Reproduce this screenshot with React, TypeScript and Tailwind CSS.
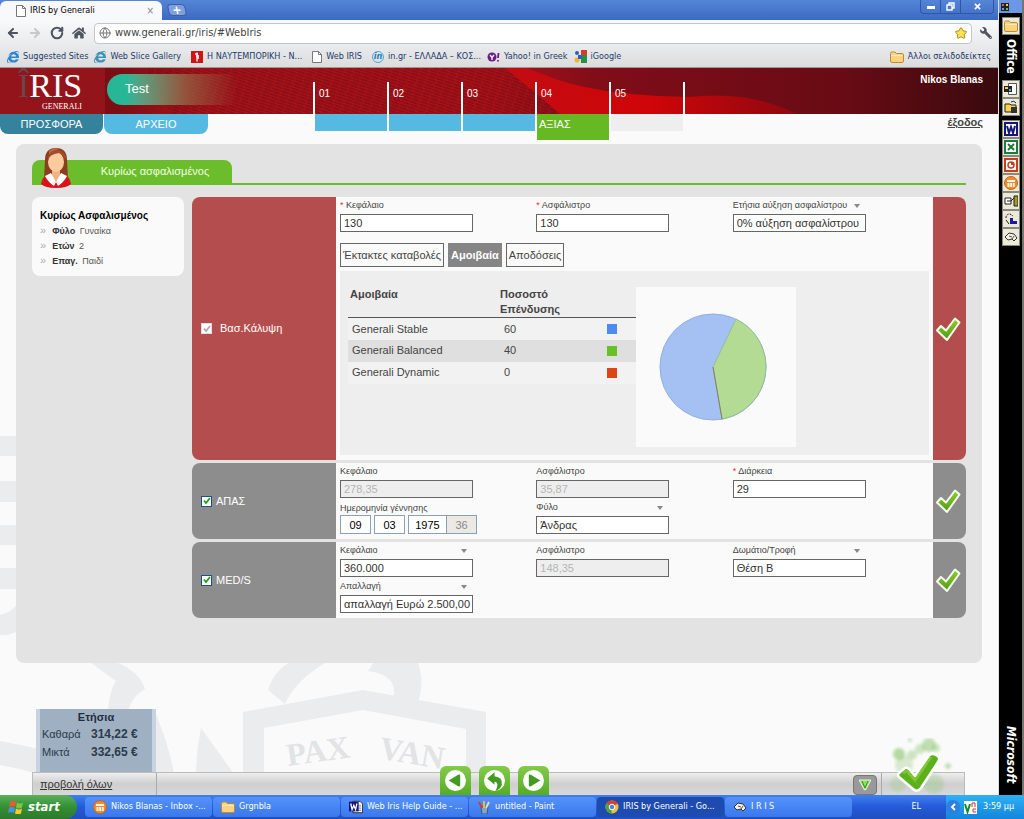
import { useId, useState } from "react";
import type { ReactNode } from "react";
import clsx from "clsx";
import { ArrowLeft, ArrowRight, Globe, RotateCw } from "lucide-react";
import { FaHome, FaInternetExplorer, FaStar, FaWrench } from "react-icons/fa";

const steps = [
  { no: "01", label: "", bar: "h-[17px] bg-[#55b9e1]" },
  { no: "02", label: "", bar: "h-[17px] bg-[#55b9e1]" },
  { no: "03", label: "", bar: "h-[17px] bg-[#55b9e1]" },
  { no: "04", label: "ΑΞΙΑΣ", bar: "h-[26px] bg-[#66b922]" },
  { no: "05", label: "", bar: "h-[17px] bg-[#eeeeee]" },
];

const funds = [
  { name: "Generali Stable", share: 60, color: "bg-[#4f8af0]", row: "bg-[#f2f2f2]" },
  { name: "Generali Balanced", share: 40, color: "bg-[#67c027]", row: "bg-[#dfdfdf]" },
  { name: "Generali Dynamic", share: 0, color: "bg-[#dd4418]", row: "bg-[#f2f2f2]" },
];

const tabs = ["Έκτακτες καταβολές", "Αμοιβαία", "Αποδόσεις"];

function PageIcon() {
  return (
    <svg viewBox="0 0 10 12" className="h-3 w-[10px] shrink-0">
      <path d="M.5.5h6l3 3v8h-9z" fill="#fff" stroke="#777" />
      <path d="M6.500.5v3h3" fill="none" stroke="#777" />
    </svg>
  );
}

function FolderIcon() {
  return (
    <svg viewBox="0 0 14 12" className="h-3 w-3.5 shrink-0">
      <path d="M.5 2.500q0-1.500 1.500-1.500h3l1.500 1.500h5.500q1.500 0 1.500 1.500v6q0 1.500-1.500 1.500H2Q.5 11.500.5 10z" fill="#fbd27d" stroke="#c08a35" />
      <path d="M1 4.500h12" stroke="#fdebbb" />
    </svg>
  );
}

function WordIcon() {
  return (
    <svg viewBox="0 0 16 16" className="size-3.5 shrink-0">
      <path d="M4.500 1.500h8l3 3v10h-11z" fill="#fff" stroke="#222" />
      <path d="M9 6h5M9 8h5M9 10h5M9 12h5" stroke="#889" />
      <path d="M0 2h11v11H0z" fill="#15157c" />
      <path d="M2 4l1.500 7 2-5 2 5L9 4" fill="none" stroke="#fff" strokeWidth="1.500" />
    </svg>
  );
}

function OutlookIcon() {
  return (
    <svg viewBox="0 0 14 14" className="size-3.5 shrink-0">
      <circle cx="7" cy="7" r="6.500" fill="#f08c2e" stroke="#c8641a" />
      <path d="M3 4h8v2H3zM3.500 7h2v4h-2zM6.200 7h1.800v4H6.200zM8.800 7h2v4h-2z" fill="#fff6e6" />
    </svg>
  );
}

function PaintIcon() {
  return (
    <svg viewBox="0 0 14 14" className="size-3.5 shrink-0">
      <path d="M4 7h7l-1 7H5z" fill="#7fa6c9" stroke="#345" strokeWidth=".7" />
      <path d="M5 8L2 2" stroke="#d43b2a" strokeWidth="1.800" />
      <path d="M7 8V1" stroke="#f2c230" strokeWidth="1.800" />
      <path d="M9 8l3-6" stroke="#e8dcc4" strokeWidth="1.800" />
    </svg>
  );
}

function HelmetIcon() {
  return (
    <svg viewBox="0 0 14 12" className="h-3 w-3.5 shrink-0">
      <path d="M1 6l4-4 5 1 3 4-3 3-2-2-4 1z" fill="#f4efe2" stroke="#333" />
      <path d="M5 5l3 1M8 8l2-3" stroke="#555" />
    </svg>
  );
}

function ChromeBall() {
  return (
    <svg viewBox="0 0 14 14" className="size-3.5 shrink-0">
      <circle cx="7" cy="7" r="6.500" fill="#f2c12e" />
      <path d="M7 7L1.400 3.700A6.500 6.500 0 0 1 12.600 3.700z" fill="#d8402c" />
      <path d="M7 7L1.400 3.700A6.500 6.500 0 0 0 6.500 13.500z" fill="#4ba043" />
      <circle cx="7" cy="7" r="2.800" fill="#4a86d8" stroke="#fff" />
    </svg>
  );
}

function CheckMark({ className }: { className: string }) {
  return (
    <svg viewBox="0 0 26 26" className={className}>
      <defs>
        <linearGradient id="tick" x1="0" y1="0" x2="0" y2="1">
          <stop offset="0" stopColor="#8fd030" />
          <stop offset="1" stopColor="#4f9a15" />
        </linearGradient>
      </defs>
      <path d="M2 14.500l4-4.500 5 4.500L20 2.500l4.500 4L12 24z" fill="url(#tick)" stroke="#f8fdf0" strokeWidth="2" strokeLinejoin="round" />
    </svg>
  );
}

function Bookmark({ icon, children }: { icon: ReactNode; children: ReactNode }) {
  return (
    <a href="#" className="flex items-center gap-1 whitespace-nowrap">
      {icon}
      {children}
    </a>
  );
}

function BrowserChrome() {
  return (
    <div className="font-['DejaVu_Sans_Condensed','Liberation_Sans',sans-serif] text-[9px]">
      <div className="flex h-5 items-end bg-linear-to-b from-[#5585d6] to-[#3c69c2]">
        <div className="flex h-[19px] w-[162px] items-center gap-1 rounded-t-md bg-[#f8f9fb] pr-2 pl-4 text-black">
          <PageIcon />
          <span className="flex-1 whitespace-nowrap">IRIS by Generali</span>
          <button aria-label="Close tab" className="text-[10px] text-[#888]">×</button>
        </div>
        <button aria-label="New tab" className="mb-1 ml-1.5 h-3 w-[18px] skew-x-12 rounded-sm border border-[#3b60a8] bg-[#7f9fdc] text-[12px] leading-[8px] font-bold text-white">+</button>
        <div className="mr-1 ml-auto flex h-[14px] self-start rounded-b border border-t-0 border-[#2f57a8] text-white">
          <button aria-label="Minimize" className="flex w-5 items-end justify-center border-r border-[#2f57a8] pb-1">
            <svg viewBox="0 0 8 3" className="h-[3px] w-2"><path d="M0 0h8v3H0z" fill="#fff" /></svg>
          </button>
          <button aria-label="Restore" className="flex w-5 items-center justify-center border-r border-[#2f57a8]">
            <svg viewBox="0 0 9 9" className="size-[9px]"><path d="M3 3V1h5v5H6M1 3h5v5H1z" fill="none" stroke="#fff" strokeWidth="1.400" /></svg>
          </button>
          <button aria-label="Close" className="flex w-8 items-center justify-center">
            <svg viewBox="0 0 8 8" className="size-[7px]"><path d="M1 1l6 6M7 1L1 7" stroke="#fff" strokeWidth="1.800" /></svg>
          </button>
        </div>
      </div>
      <div className="flex h-[26px] items-center gap-2 bg-linear-to-b from-[#f8f9fb] to-[#e9eaec] px-1.5 text-[#4d5560]">
        <button aria-label="Back"><ArrowLeft className="size-3.5" strokeWidth={3.5} /></button>
        <button aria-label="Forward"><ArrowRight className="size-3.5 text-[#c6c9cd]" strokeWidth={3.5} /></button>
        <button aria-label="Reload"><RotateCw className="size-3.5" strokeWidth={3.5} /></button>
        <button aria-label="Home"><FaHome className="size-3.5" /></button>
        <div className="flex h-[21px] flex-1 items-center gap-1 rounded border border-[#c5c5c5] bg-white px-1">
          <Globe className="size-3 text-[#777]" />
          <input
            aria-label="Address"
            className="min-w-0 flex-1 bg-transparent font-['DejaVu_Sans_Condensed','Liberation_Sans',sans-serif] text-[11px] text-[#444] outline-none"
            defaultValue="www.generali.gr/iris/#WebIris"
          />
          <FaStar className="size-3 fill-[#ffe04d] stroke-[#9a7a20] stroke-[40px]" />
        </div>
        <button aria-label="Settings"><FaWrench className="size-3 -scale-x-100" /></button>
      </div>
      <div className="flex h-[22px] items-center gap-1.5 border-b border-[#999] bg-linear-to-b from-[#e9eaec] to-[#dcdcdc] px-[7px] text-[#1c3a6e]">
        <Bookmark icon={<FaInternetExplorer className="size-3 text-[#2d87cf]" />}>Suggested Sites</Bookmark>
        <Bookmark icon={<FaInternetExplorer className="size-3 text-[#3b94b8]" />}>Web Slice Gallery</Bookmark>
        <div className="ml-1">
          <Bookmark
            icon={
              <svg viewBox="0 0 12 12" className="size-3">
                <path d="M0 0h12v12H0z" fill="#cf1515" />
                <path d="M6 1.500v9M4 3h3M5 5h3M6 7h2" stroke="#fff" strokeWidth="1.300" />
              </svg>
            }
          >
            Η ΝΑΥΤΕΜΠΟΡΙΚΗ - Ν...
          </Bookmark>
        </div>
        <div className="ml-1">
          <Bookmark icon={<PageIcon />}>Web IRIS</Bookmark>
        </div>
        <div className="ml-1">
          <Bookmark icon={<span className="flex size-3 items-center justify-center rounded-full border border-[#4aa9d4] text-[9px] leading-none font-bold text-[#1f7fb8] italic">in</span>}>
            in.gr - ΕΛΛΑΔΑ – ΚΟΣ...
          </Bookmark>
        </div>
        <Bookmark
          icon={
            <svg viewBox="0 0 13 10" className="h-2.5 w-[13px]">
              <circle cx="5" cy="5" r="4.500" fill="#6d1b86" />
              <path d="M3 3l2 2.500L7 3M5 5.500V8" fill="none" stroke="#fff" strokeWidth="1.300" />
              <path d="M11.500 1l-.5 5M11 8v1.500" stroke="#6d1b86" strokeWidth="1.800" />
            </svg>
          }
        >
          Yahoo! in Greek
        </Bookmark>
        <Bookmark
          icon={
            <svg viewBox="0 0 13 13" className="size-[13px]">
              <path d="M7 0h6v5H7z" fill="#d93a25" />
              <path d="M7 5h6v8H7z" fill="#269044" />
              <circle cx="3" cy="3" r="2" fill="#2b5fc4" />
              <circle cx="3" cy="10" r="2.500" fill="#efb52e" />
              <path d="M4 5h4v4H4z" fill="#2b5fc4" />
            </svg>
          }
        >
          iGoogle
        </Bookmark>
        <div className="ml-auto">
          <Bookmark icon={<FolderIcon />}>Άλλοι σελιδοδείκτες</Bookmark>
        </div>
      </div>
    </div>
  );
}

function HeaderArt() {
  return (
    <svg viewBox="0 0 998 46" preserveAspectRatio="none" className="absolute inset-x-0 top-0 h-[46px] w-full">
      <defs>
        <linearGradient id="banner">
          <stop offset="0" stopColor="#6f0c12" />
          <stop offset=".12" stopColor="#7d0d13" />
          <stop offset=".2" stopColor="#a5141a" />
          <stop offset=".5" stopColor="#a81218" />
          <stop offset=".6" stopColor="#800d18" />
          <stop offset=".85" stopColor="#680b14" />
          <stop offset="1" stopColor="#380a0e" />
        </linearGradient>
        <linearGradient id="wave">
          <stop offset="0" stopColor="#c20c12" />
          <stop offset=".5" stopColor="#cf0508" />
          <stop offset="1" stopColor="#8d0810" />
        </linearGradient>
        <pattern id="mesh" width="9" height="6" patternUnits="userSpaceOnUse" patternTransform="rotate(18)">
          <path d="M0 1h9M0 4h9" stroke="#6e0710" strokeWidth="1.200" />
          <path d="M3 0l3 6" stroke="#c0141a" strokeWidth=".6" />
        </pattern>
      </defs>
      <path d="M0 0h998v46H0z" fill="url(#banner)" />
      <path d="M145 0h382q30 28 70 46H172z" fill="url(#mesh)" opacity=".85" />
      <path d="M505 0h22c55 24 100 27 160 29 40-3 70-2 110 17H560Q540 28 505 0z" fill="url(#wave)" />
      <path d="M0 0h105v46H0z" fill="#93141a" />
    </svg>
  );
}

function Header() {
  return (
    <header className="relative flex items-start">
      <HeaderArt />
      <div className="relative w-[313px] text-[11px]">
        <div className="flex h-[46px] items-center">
          <div className="w-[107px] pl-[18px] font-['Liberation_Serif',serif] text-white">
            <div className="text-[34px] leading-8"><span className="text-[#69474a]">Î</span>RIS</div>
            <div className="w-16 text-right text-[8px] leading-[10px]">GENERALI</div>
          </div>
          <div className="mb-1 flex h-[31px] w-[130px] items-center rounded-l-full bg-linear-to-r from-[#27b797] from-15% via-[#94704a]/70 via-60% to-transparent pl-[18px] text-[13px] text-white">
            Test
          </div>
        </div>
        <nav className="flex text-center leading-5 text-white">
          <a href="#" className="w-[103px] rounded-b-lg bg-[#35829c]">ΠΡΟΣΦΟΡΑ</a>
          <a href="#" className="ml-px w-[104px] rounded-b-lg bg-[#55b9e1]">ΑΡΧΕΙΟ</a>
        </nav>
      </div>
      <ol className="relative flex items-start pt-3.5 text-[10px] text-white">
        {steps.map((step) => (
          <li key={step.no} className="flex w-[74px]">
            <div className="h-[49px] w-0.5 bg-white" />
            <div className="flex-1">
              <div className="h-8 pl-1 leading-6">{step.no}</div>
              <div className={clsx("pl-0.5 text-[11px] leading-5", step.bar)}>{step.label}</div>
            </div>
          </li>
        ))}
        <li className="h-8 w-0.5 bg-white" />
      </ol>
      <div className="relative ml-auto pr-[15px] text-right text-[10px] font-bold">
        <div className="h-[46px] pt-1 text-white">Nikos Blanas</div>
        <a href="#" className="text-[11px] text-[#444] underline">έξοδος</a>
      </div>
    </header>
  );
}

function Watermark() {
  return (
    <svg viewBox="0 0 998 727" className="absolute bottom-0 left-0 w-full">
      <g fill="#ebecee">
        <path d="M0 368h60v20H0zM0 413h60v21H0zM0 457h60v20H0zM0 500h60v21H0z" />
        <path d="M0 547q14-3 20-16v30q-8 7-20 6z" />
        <path d="M82 587l34 7q24 10 29 27-17 10-17 28l-20-6q2-22 8-30-18-12-34-26z" />
        <path d="M0 673q45 8 82 20v28Q40 704 0 697z" />
        <path d="M300 590q-25 8-32 32l17 14q10-24 45-44zM376 591h40q12 24-2 52l-22-6q10-30-24-34z" />
        <path d="M156 646q20 50 20 81h-20zM201 660q30 42 45 62v5h-49q-3-35 4-67z" />
        <path d="M243 644l120-22 123 22v83h-20v-66l-103-19-99 18v67h-21z" />
      </g>
      <g fill="#e2e3e5" fontFamily="Liberation Serif, serif" fontSize="32" fontWeight="bold">
        <text x="288" y="698" transform="rotate(-8 288 698)">PAX</text>
        <text x="378" y="690" transform="rotate(10 378 690)">VAN</text>
      </g>
    </svg>
  );
}

function WomanIcon() {
  return (
    <svg viewBox="0 0 32 42" className="h-[42px] w-8">
      <path d="M16 1Q5 1 5 13L4 32q5 4 12 4t12-4L27 13Q27 1 16 1z" fill="#8c3d20" />
      <path d="M9 4q5-4 10-2-8 2-10 9z" fill="#c46a40" />
      <path d="M1 37q1-8 10-10h10q9 2 10 10-4 4-15 4T1 37z" fill="#d8141a" />
      <path d="M12 22h8v8l-4 5-4-5z" fill="#f0b184" />
      <path d="M5 29l6-3 5 9-2 4q-6-4-9-10zM27 29l-6-3-5 9 2 4q6-4 9-10z" fill="#fff" />
      <ellipse cx="16" cy="15" rx="8" ry="10" fill="#fbcb9d" />
      <path d="M8 14q1-7 11-8 6 2 6 9l1-6Q23 2 15 3 7 5 8 14z" fill="#a24c2b" />
    </svg>
  );
}

type FieldProps = {
  label: string;
  value: string;
  required?: boolean;
  disabled?: boolean;
  dropdown?: boolean;
};

function Field({ label, value, required, disabled, dropdown }: FieldProps) {
  const id = useId();
  const box = "block h-[18px] w-[133px] appearance-none border border-[#666] pl-[3px] text-[11px] leading-4";

  return (
    <div>
      <div className="flex h-4 w-[127px] items-center justify-between text-[9px] text-[#444]">
        <label htmlFor={id} className="whitespace-nowrap">
          {required && <span className="text-[#d33]">* </span>}
          {label}
        </label>
        {dropdown && (
          <svg viewBox="0 0 6 4" className="h-1 w-1.5"><path d="M0 0h6L3 4z" fill="#888" /></svg>
        )}
      </div>
      {dropdown ? (
        <select id={id} className={clsx(box, "bg-white text-[#333]")}>
          <option>{value}</option>
        </select>
      ) : (
        <input
          id={id}
          defaultValue={value}
          disabled={disabled}
          className={clsx(box, disabled ? "bg-[#eeeeee] text-[#b5b5b5]" : "bg-white text-[#333]")}
        />
      )}
    </div>
  );
}

function BirthDate() {
  const part = "h-[19px] border border-[#8aa0b5] text-center text-[11px]";

  return (
    <fieldset>
      <legend className="h-4 text-[9px] leading-4 text-[#444]">Ημερομηνία γέννησης</legend>
      <div className="-mt-px flex">
        <input aria-label="Ημέρα" defaultValue="09" className={clsx(part, "mr-[3px] w-[31px] bg-white")} />
        <input aria-label="Μήνας" defaultValue="03" className={clsx(part, "mr-[3px] w-[31px] bg-white")} />
        <input aria-label="Έτος" defaultValue="1975" className={clsx(part, "w-[39px] bg-white")} />
        <input aria-label="Ηλικία" defaultValue="36" disabled className={clsx(part, "-ml-px w-[31px] bg-[#ece9e4] text-[#888]")} />
      </div>
    </fieldset>
  );
}

type CoverProps = {
  title: string;
  main?: boolean;
  children: ReactNode;
};

function Cover({ title, main, children }: CoverProps) {
  const color = main ? "bg-[#b44d4d]" : "bg-[#8d8d8d]";

  return (
    <section className="flex rounded-[10px] bg-[#fafafa]">
      <label className={clsx("flex w-36 shrink-0 items-center rounded-l-lg pl-[9px] text-[11px] text-white", main ? "gap-2" : "gap-1", color)}>
        <span className="grid place-items-center">
          <input
            type="checkbox"
            defaultChecked
            disabled={main}
            className={clsx("size-[11px] appearance-none border bg-white [grid-area:1/1]", main ? "border-[#ddd]" : "border-[#1c5180]")}
          />
          <svg viewBox="0 0 8 8" className="pointer-events-none size-2 [grid-area:1/1]">
            <path d="M1 3.500l2 2.500 4-5" fill="none" stroke={main ? "#aaa" : "#21a121"} strokeWidth="1.800" />
          </svg>
        </span>
        {title}
      </label>
      <div className="flex-1 px-1 pt-px pb-[5px]">{children}</div>
      <div className={clsx("flex w-[33px] items-center rounded-r-lg pl-0.5", color)}>
        <CheckMark className="size-[26px]" />
      </div>
    </section>
  );
}

function FundsPanel() {
  return (
    <div className="mt-1 flex bg-[#eeeeee] px-2 pt-4 pb-2">
      <table className="w-72 self-start text-left text-[11px] text-[#444]">
        <thead>
          <tr className="border-b border-[#555] align-top leading-[15px]">
            <th className="w-[152px] pl-0.5">Αμοιβαία</th>
            <th className="w-[107px]">Ποσοστό<br />Επένδυσης</th>
            <th />
          </tr>
        </thead>
        <tbody>
          {funds.map((fund) => (
            <tr key={fund.name} className={clsx("h-[22px]", fund.row)}>
              <td className="pl-1">{fund.name}</td>
              <td className="pl-1">{fund.share}</td>
              <td><div className={clsx("size-2.5", fund.color)} /></td>
            </tr>
          ))}
        </tbody>
      </table>
      <svg viewBox="0 0 160 160" className="size-40 bg-[#fafafa]">
        <circle cx="77" cy="80" r="53" fill="#a5c1f3" stroke="#8fb0dc" />
        <path d="M77 80L100 32A53 53 0 0 1 86 132z" fill="#b3db93" stroke="#8fc09a" />
        <path d="M77 80l9 52" stroke="#8a7a6a" />
      </svg>
    </div>
  );
}

function MainPanel() {
  const [active, setActive] = useState("Αμοιβαία");

  return (
    <main className="relative mx-4 mt-1 rounded-lg bg-[#e3e3e3] px-4 pt-4 pb-[45px]">
      <div className="border-b-2 border-[#6cbd2b]">
        <div className="flex h-[23px] w-[200px] items-center rounded-t-lg bg-[#6cbd2b] pl-2 text-[11px] text-[#f2ffe6]">
          <div className="-mt-2"><WomanIcon /></div>
          <h2 className="flex-1 pl-1.5 text-center">Κυρίως ασφαλισμένος</h2>
        </div>
      </div>
      <div className="mt-3 flex items-start gap-2">
        <aside className="w-38 rounded-lg bg-[#fafafa] px-2 pt-3 pb-2 text-[9px] text-[#555]">
          <h3 className="text-[10px] leading-[14px] font-bold whitespace-nowrap text-black">Κυρίως Ασφαλισμένος</h3>
          <ul className="leading-[14px]">
            <li><span className="mr-1.5 text-[11px] text-[#aaa]">»</span><b className="mr-0.5 text-[#333]">Φύλο</b> Γυναίκα</li>
            <li><span className="mr-1.5 text-[11px] text-[#aaa]">»</span><b className="mr-0.5 text-[#333]">Ετών</b> 2</li>
            <li><span className="mr-1.5 text-[11px] text-[#aaa]">»</span><b className="mr-0.5 text-[#333]">Επαγ.</b> Παιδί</li>
          </ul>
        </aside>
        <div className="flex min-w-0 flex-1 flex-col gap-[3px]">
          <Cover title="Βασ.Κάλυψη" main>
            <div className="grid grid-cols-3">
              <Field label="Κεφάλαιο" value="130" required />
              <Field label="Ασφάλιστρο" value="130" required />
              <Field label="Ετήσια αύξηση ασφαλίστρου" value="0% αύξηση ασφαλίστρου" dropdown />
            </div>
            <div className="mt-[11px] flex gap-1 text-[11px]">
              {tabs.map((tab) => (
                <button
                  key={tab}
                  onClick={() => setActive(tab)}
                  className={clsx(
                    "h-6 border px-0.5",
                    tab === active ? "border-[#858585] bg-[#858585] font-bold text-white" : "border-[#666] bg-[#fafafa] text-[#444]",
                  )}
                >
                  {tab}
                </button>
              ))}
            </div>
            <FundsPanel />
          </Cover>
          <Cover title="ΑΠΑΣ">
            <div className="grid grid-cols-3 gap-y-0.5">
              <Field label="Κεφάλαιο" value="278,35" disabled />
              <Field label="Ασφάλιστρο" value="35,87" disabled />
              <Field label="Διάρκεια" value="29" required />
              <BirthDate />
              <Field label="Φύλο" value="Άνδρας" dropdown />
            </div>
          </Cover>
          <Cover title="MED/S">
            <div className="grid grid-cols-3 gap-y-0.5">
              <Field label="Κεφάλαιο" value="360.000" dropdown />
              <Field label="Ασφάλιστρο" value="148,35" disabled />
              <Field label="Δωμάτιο/Τροφή" value="Θέση Β" dropdown />
              <Field label="Απαλλαγή" value="απαλλαγή Ευρώ 2.500,00" dropdown />
            </div>
          </Cover>
        </div>
      </div>
    </main>
  );
}

function NavButton({ label, children }: { label: string; children: ReactNode }) {
  return (
    <button aria-label={label} className="flex h-[29px] w-[31px] items-center justify-center rounded-t-md bg-linear-to-b from-[#83cb4a] to-[#55ad22]">
      <svg viewBox="0 0 22 22" className="size-[23px]">
        <circle cx="11" cy="11" r="10" fill="#fff" />
        {children}
      </svg>
    </button>
  );
}

function SplashCheck() {
  return (
    <svg viewBox="0 0 70 57" className="h-[57px] w-[70px]">
      <defs>
        <filter id="soft"><feGaussianBlur stdDeviation="1.600" /></filter>
      </defs>
      <g fill="#86c46a" filter="url(#soft)">
        <circle cx="13" cy="16" r="6" opacity=".6" />
        <circle cx="26" cy="17" r="5" opacity=".4" />
        <circle cx="43" cy="7" r="7" opacity=".5" />
        <circle cx="34" cy="11" r="5" opacity=".4" />
        <circle cx="50" cy="10" r="4" opacity=".4" />
        <circle cx="18" cy="27" r="9" opacity=".3" />
        <circle cx="12" cy="46" r="8" opacity=".25" />
        <circle cx="48" cy="46" r="10" opacity=".3" />
        <circle cx="62" cy="28" r="3" opacity=".5" />
        <circle cx="24" cy="2" r="2" opacity=".5" />
      </g>
      <path d="M13 35l6-5q2-1 4 1l6 7 13-19q3-5 8-2 5 2 2 7L35 50q-4 5-8 1L13 39q-2-2 0-4z" fill="#5cb01c" stroke="#fff" strokeWidth="2.500" strokeLinejoin="round" />
      <path d="M17 35l4-2 8 9 16-23" fill="none" stroke="#9fdc4a" strokeWidth="3" opacity=".5" />
    </svg>
  );
}

function Footer() {
  return (
    <footer className="relative mt-auto mr-[33px] ml-8">
      <div className="ml-1 h-[63px] w-[120px] border-x-4 border-[#c7d3e0] bg-[#9fb0c2]">
        <table className="w-full text-[11px] leading-[18px] text-[#2c3a4a]">
          <caption className="leading-4 font-bold text-[#1f2d3d]">Ετήσια</caption>
          <tbody>
            <tr><th className="w-[51px] pl-0.5 text-left font-normal">Καθαρά</th><td className="text-[12px] font-bold">314,22 €</td></tr>
            <tr><th className="pl-0.5 text-left font-normal">Μικτά</th><td className="text-[12px] font-bold">332,65 €</td></tr>
          </tbody>
        </table>
      </div>
      <div className="flex h-[23px] items-end border border-b-0 border-[#bbb] bg-linear-to-b from-[#eeeeee] via-[#cfcfcf] to-[#d8d8d8]">
        <div className="h-full w-[124px] border-r border-[#aaa] pl-[7px] text-[11px] leading-[22px]">
          <a href="#" className="text-[#333] underline">προβολή όλων</a>
        </div>
        <div className="flex flex-1 justify-end gap-2">
          <NavButton label="Προηγούμενο">
            <path d="M4.500 11l9-5.500q2-1 2 1v9q0 2-2 1z" fill="#459a22" />
          </NavButton>
          <NavButton label="Επαναφορά">
            <path d="M4 9l7-6v4q8 1 7 8-1 4-6 6 4-8-1-9v3z" fill="#459a22" />
          </NavButton>
          <NavButton label="Επόμενο">
            <path d="M17.500 11l-9-5.500q-2-1-2 1v9q0 2 2 1z" fill="#459a22" />
          </NavButton>
        </div>
        <div className="flex w-[415px] items-end justify-end">
          <button aria-label="Φίλτρο" className="flex h-5 w-6 items-center justify-center rounded border border-[#777] bg-[#999]">
            <svg viewBox="0 0 12 12" className="size-3"><path d="M0 1h12L6.500 11h-1z" fill="#8fe060" stroke="#fff" strokeWidth=".8" /><path d="M3 2l3 7 3-7" fill="none" stroke="#3c8f20" /></svg>
          </button>
          <div className="ml-1 h-[22px] w-px bg-[#aaa]" />
          <button aria-label="Αποδοχή" className="mr-2 ml-1"><SplashCheck /></button>
        </div>
      </div>
    </footer>
  );
}

function OfficeTile({ children }: { children: ReactNode }) {
  return (
    <button aria-label="Office shortcut" className="flex size-[18px] items-center justify-center border border-[#8a877c] bg-[#ece9d8]">
      {children}
    </button>
  );
}

function OfficeBar() {
  return (
    <aside className="flex w-[26px] flex-col items-center border-r-2 border-l border-r-[#77756c] border-l-[#ddd] bg-black font-['DejaVu_Sans_Condensed','Liberation_Sans',sans-serif] font-bold text-white">
      <div className="flex h-[13px] w-full items-center bg-[#6b97e6] pl-0.5">
        <svg viewBox="0 0 8 8" className="size-2"><path d="M0 0h8v8H0z" fill="#222" /><path d="M1 1h2v2H1z" fill="#e55" /><path d="M5 1h2v2H5z" fill="#fc3" /><path d="M1 5h2v2H1z" fill="#5ae" /><path d="M5 5h2v2H5z" fill="#5c5" /></svg>
      </div>
      <div className="mt-1"><OfficeTile><FolderIcon /></OfficeTile></div>
      <span className="mt-1 text-[12px] leading-5 [writing-mode:vertical-rl]">Office</span>
      <div className="mt-1.5 flex flex-col">
        <OfficeTile>
          <svg viewBox="0 0 14 14" className="size-3.5"><path d="M4.500 1.500h8v11h-8z" fill="#fff" stroke="#555" /><path d="M0 4h8v6H0z" fill="#222" /><path d="M1 5h3v2H1z" fill="#fc3" /><path d="M5 7h2v2H5z" fill="#5ae" /></svg>
        </OfficeTile>
        <OfficeTile>
          <svg viewBox="0 0 14 14" className="size-3.5"><path d="M1 4h5l1 1h5v7H1z" fill="#f6d44a" stroke="#222" /><path d="M7 7h6v6H7z" fill="#333" /><path d="M7 2q3-2 5 1" fill="none" stroke="#222" /></svg>
        </OfficeTile>
      </div>
      <div className="mt-1 flex flex-col">
        <OfficeTile>
          <svg viewBox="0 0 14 14" className="size-3.5"><path d="M1 1h12v12H1z" fill="#fff" stroke="#15157c" strokeWidth="2" /><path d="M3 4l2 7 2-6 2 6 2-7" fill="none" stroke="#15157c" strokeWidth="2" /></svg>
        </OfficeTile>
        <OfficeTile>
          <svg viewBox="0 0 14 14" className="size-3.5"><path d="M1 1h12v12H1z" fill="#fff" stroke="#1c7a3c" strokeWidth="2" /><path d="M4 4l6 6M10 4l-6 6" stroke="#1c7a3c" strokeWidth="2" /></svg>
        </OfficeTile>
        <OfficeTile>
          <svg viewBox="0 0 14 14" className="size-3.5"><path d="M1 1h12v12H1z" fill="#fff" stroke="#c3401f" strokeWidth="2" /><circle cx="7" cy="7" r="3" fill="none" stroke="#c3401f" strokeWidth="1.500" /><path d="M7 7V4h3v3z" fill="#c3401f" /></svg>
        </OfficeTile>
        <OfficeTile><OutlookIcon /></OfficeTile>
        <OfficeTile>
          <svg viewBox="0 0 14 14" className="size-3.5"><path d="M1 4h6v6H1z" fill="#fff" stroke="#222" /><path d="M7 7l3-3M3 7h4" stroke="#222" /><path d="M10 2h4v10h-4z" fill="#a8972a" stroke="#222" /></svg>
        </OfficeTile>
        <OfficeTile>
          <svg viewBox="0 0 14 14" className="size-3.5"><path d="M2 6q0-4 4-4l3 2" fill="none" stroke="#222" strokeDasharray="2 1" /><path d="M6 6h3v3h4v3H6z" fill="#1b1b9a" /><path d="M2 8l3 4" stroke="#222" /></svg>
        </OfficeTile>
        <OfficeTile><HelmetIcon /></OfficeTile>
      </div>
      <span className="mt-auto mb-3 text-[12px] leading-5 italic [writing-mode:vertical-rl]">Microsoft</span>
    </aside>
  );
}

const tasks = [
  { title: "Nikos Blanas - Inbox -...", icon: <OutlookIcon /> },
  { title: "Grgnbla", icon: <FolderIcon /> },
  { title: "Web Iris Help Guide - ...", icon: <WordIcon /> },
  { title: "untitled - Paint", icon: <PaintIcon /> },
  { title: "IRIS by Generali - Go...", icon: <ChromeBall />, active: true },
  { title: "I R I S", icon: <HelmetIcon /> },
];

function Taskbar() {
  return (
    <div className="flex h-6 items-center bg-linear-to-b from-[#3f80ee] via-[#2459d8] to-[#1f4fc0] font-['DejaVu_Sans_Condensed','Liberation_Sans',sans-serif] text-[9px] text-white">
      <button className="flex h-full w-[77px] items-center gap-1 rounded-r-xl bg-linear-to-b from-[#5bb05b] via-[#339033] to-[#2c7a2c] pl-2 text-[13px] font-bold italic">
        <svg viewBox="0 0 16 14" className="h-3.5 w-4">
          <path d="M2 2q3-2 6 0L7 7Q4 5 1 7z" fill="#ef5a2c" />
          <path d="M9 2.500q3 2 6 0L14 7.500q-3 2-6 0z" fill="#7cc540" />
          <path d="M1 8q3-2 6 0l-1 5q-3-2-6 0z" fill="#4d8df0" />
          <path d="M8 8.500q3 2 6 0l-1 5q-3 2-6 0z" fill="#fac834" />
        </svg>
        start
      </button>
      <div className="ml-2 flex min-w-0 flex-1 gap-px">
        {tasks.map((task) => (
          <button
            key={task.title}
            className={clsx(
              "flex h-5 w-[127px] items-center gap-1 rounded-sm pl-2 whitespace-nowrap",
              task.active ? "bg-[#1e4bb0]" : "bg-linear-to-b from-[#5592f8] to-[#3a78ee]",
            )}
          >
            {task.icon}
            {task.title}
          </button>
        ))}
      </div>
      <span className="mr-[25px]">EL</span>
      <div className="flex h-full w-[78px] items-center gap-1 bg-linear-to-b from-[#2fb0f5] to-[#1285dc] whitespace-nowrap">
        <button aria-label="Show hidden icons" className="flex size-3.5 items-center justify-center rounded-full bg-[#2f7fe0]">
          <svg viewBox="0 0 6 8" className="h-2 w-1.5"><path d="M5 1L2 4l3 3" fill="none" stroke="#fff" strokeWidth="1.800" /></svg>
        </button>
        <svg viewBox="0 0 13 13" className="size-[13px] shrink-0">
          <path d="M0 0h13v13H0z" fill="#fff" />
          <path d="M1 3l2.500 8L6 3" fill="none" stroke="#178a2c" strokeWidth="2" />
          <path d="M8 6V2h3v4M12 8H9v3h3" fill="none" stroke="#c33" />
        </svg>
        <span className="ml-0.5">3:59 μμ</span>
      </div>
    </div>
  );
}

export default function App() {
  return (
    <div className="flex min-h-screen flex-col bg-black font-['Liberation_Sans',Arial,sans-serif]">
      <div className="flex flex-1">
        <div className="flex min-w-0 flex-1 flex-col bg-[#fafafa]">
          <BrowserChrome />
          <div className="relative flex flex-1 flex-col">
            <Watermark />
            <Header />
            <MainPanel />
            <Footer />
          </div>
        </div>
        <OfficeBar />
      </div>
      <Taskbar />
    </div>
  );
}
